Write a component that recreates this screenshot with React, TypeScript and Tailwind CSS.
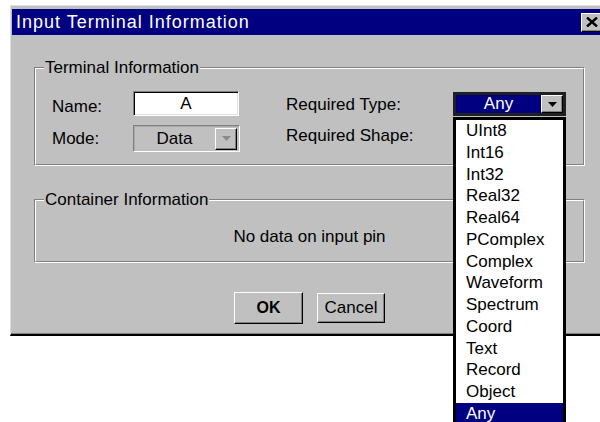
import React from "react";

// Win95-style bevels
const raised =
  "border border-t-white border-l-white border-b-black border-r-black shadow-[inset_-1px_-1px_0_#808080]";
const sunken =
  "border border-t-[#808080] border-l-[#808080] border-b-white border-r-white shadow-[inset_1px_1px_0_#000,inset_-1px_-1px_0_#dfdfdf]";

const dataTypes = [
  "UInt8",
  "Int16",
  "Int32",
  "Real32",
  "Real64",
  "PComplex",
  "Complex",
  "Waveform",
  "Spectrum",
  "Coord",
  "Text",
  "Record",
  "Object",
  "Any",
];

function DownArrow({ color }: { color: string }) {
  return (
    <svg width="9" height="5" viewBox="0 0 9 5">
      <polygon points="0,0 9,0 4.5,5" fill={color} />
    </svg>
  );
}

function GroupBox({ title, children }: { title: string; children: React.ReactNode }) {
  return (
    <div className="relative border border-t-[#808080] border-l-[#808080] border-b-white border-r-white">
      <div className="border border-t-white border-l-white border-b-[#808080] border-r-[#808080]">
        {children}
      </div>
      <span className="absolute left-[9px] top-[-10px] bg-[#c0c0c0] px-[1px] leading-[20px]">
        {title}
      </span>
    </div>
  );
}

function TypeCombo() {
  return (
    <div className="relative mt-[1px]">
      <div className="flex w-[113px] h-[24px] border-[3px] border-[#202020]">
        <span className="flex-1 bg-[#000080] text-white text-center leading-[18px]">Any</span>
        <span className={`w-[22px] h-[18px] flex items-center justify-center bg-[#c0c0c0] ${raised}`}>
          <DownArrow color="#000" />
        </span>
      </div>
      {/* open list, drops over the shape combo below */}
      <ul className="absolute left-0 top-[25px] z-10 w-[113px] border-[3px] border-black bg-white">
        {dataTypes.map((t) => (
          <li
            key={t}
            className={`h-[21.75px] leading-[21.75px] pl-[10px] ${
              t === "Any" ? "bg-[#000080] text-white" : ""
            }`}
          >
            {t}
          </li>
        ))}
      </ul>
    </div>
  );
}

export default function App() {
  return (
    <div className="w-[600px] h-[422px] overflow-hidden bg-white pl-[10px] pt-[5px] font-['Liberation_Sans',Arial,sans-serif] text-[17px] text-black">
      <div className="w-[596px] bg-[#c0c0c0] border-t border-l border-b-2 border-t-[#dfdfdf] border-l-[#dfdfdf] border-b-black shadow-[inset_0_-1px_0_#808080] pt-[3px] pl-[1px] pr-[2px]">
        {/* title bar */}
        <div className="h-[26px] bg-[#000080] flex items-center justify-between pl-[4px] pr-[2px]">
          <span className="text-white text-[18px] tracking-[1px] leading-[20px]">
            Input Terminal Information
          </span>
          <button className={`w-[21px] h-[19px] flex items-center justify-center bg-[#c0c0c0] ${raised}`}>
            <svg width="12" height="10" viewBox="0 0 12 10">
              <path d="M1 0.5 L11 9.5 M11 0.5 L1 9.5" stroke="#000" strokeWidth="2.4" />
            </svg>
          </button>
        </div>

        <div className="pl-[22px] pr-[19px] pt-[32px] pb-[10px]">
          <GroupBox title="Terminal Information">
            <div className="pl-[16px] pt-[22px] pb-[12px] leading-[20px]">
              <div className="flex items-start h-[25px]">
                <span className="w-[81px] mt-[6px]">Name:</span>
                <div className={`w-[106px] h-[25px] bg-white text-center leading-[23px] ${sunken}`}>A</div>
                <span className="ml-[47px] w-[167px] mt-[4px]">Required Type:</span>
                <TypeCombo />
              </div>
              <div className="flex items-start h-[27px] mt-[9px]">
                <span className="w-[81px] mt-[4px]">Mode:</span>
                <div className="flex items-center w-[107px] h-[27px] border border-t-[#808080] border-l-[#808080] border-b-white border-r-white shadow-[inset_1px_1px_0_#a8a8a8]">
                  <span className="flex-1 text-center">Data</span>
                  <span className={`w-[22px] h-[22px] mr-[2px] flex items-center justify-center bg-[#c0c0c0] ${raised}`}>
                    <DownArrow color="#8a8a8a" />
                  </span>
                </div>
                <span className="ml-[46px] w-[167px] mt-[1px]">Required Shape:</span>
                {/* shape combo sits under the open list */}
                <div className="w-[113px] h-[24px] bg-[#c0c0c0]" />
              </div>
            </div>
          </GroupBox>

          <div className="mt-[33px]">
            <GroupBox title="Container Information">
              <div className="pt-[26px] pb-[14px] h-[60px] text-center leading-[20px]">
                No data on input pin
              </div>
            </GroupBox>
          </div>

          <div className="mt-[29px] flex items-center justify-center gap-[14px]">
            <button className={`w-[69px] h-[32px] bg-[#c0c0c0] font-bold text-[16px] ${raised}`}>OK</button>
            <button className={`w-[68px] h-[30px] bg-[#c0c0c0] ${raised}`}>Cancel</button>
          </div>
        </div>
      </div>
    </div>
  );
}
